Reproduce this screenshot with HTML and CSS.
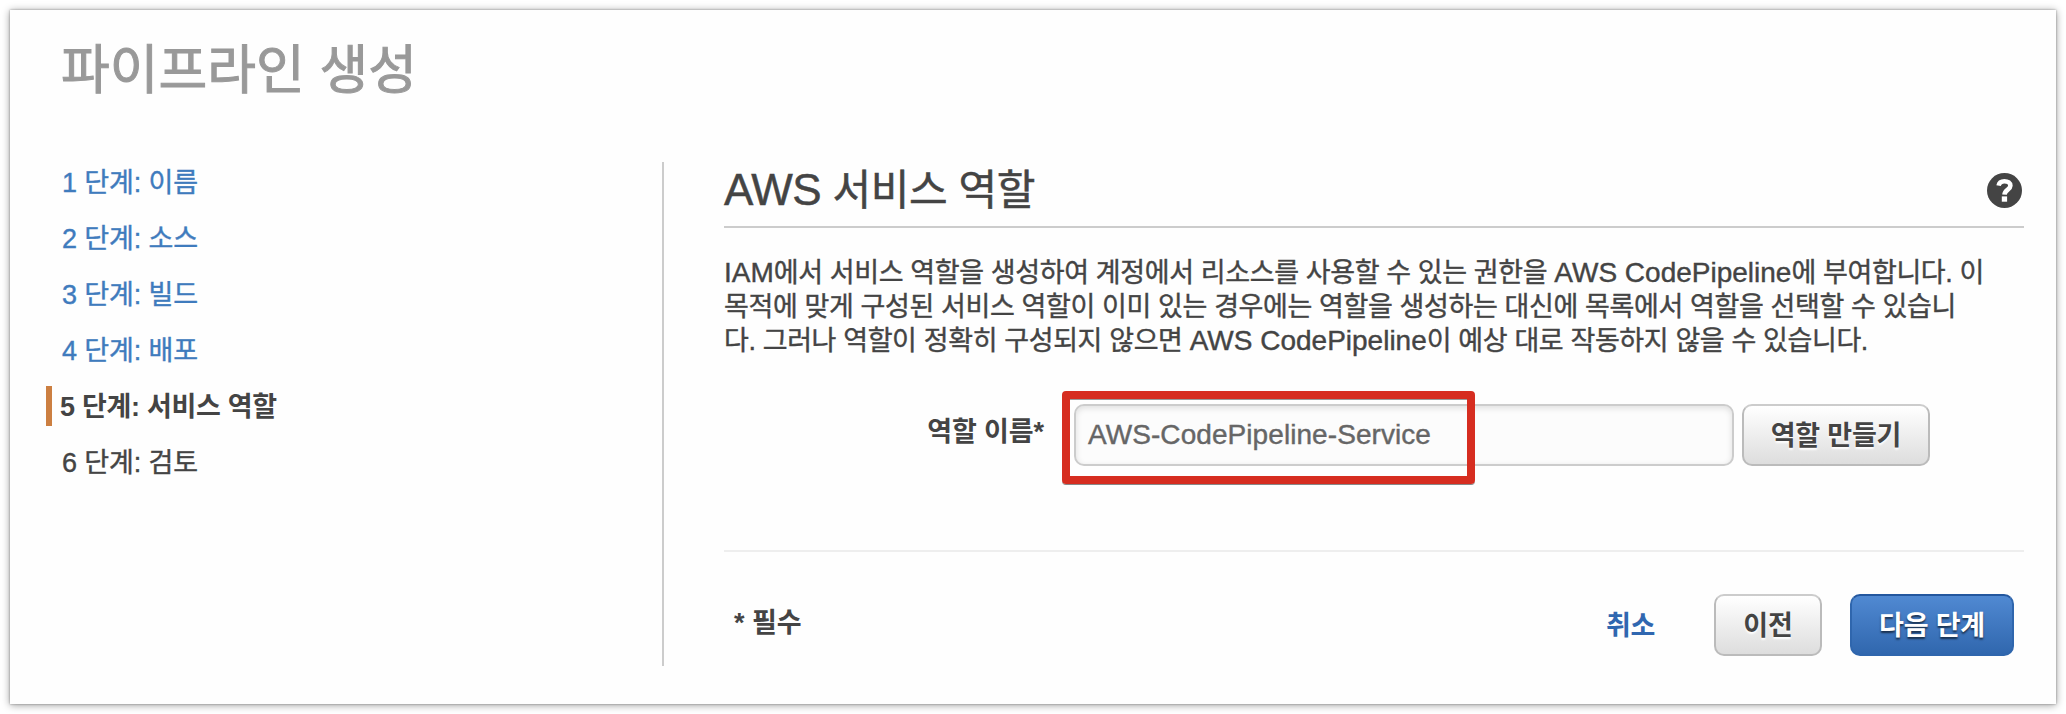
FILE: index.html
```html
<!DOCTYPE html>
<html lang="ko">
<head>
<meta charset="utf-8">
<title>파이프라인 생성</title>
<link rel="stylesheet" href="styles.css">
</head>
<body>
<div class="panel">
  <h1 class="title">파이프라인 생성</h1>
  <div class="columns">
    <nav class="steps">
      <a class="step">1 단계: 이름</a>
      <a class="step">2 단계: 소스</a>
      <a class="step">3 단계: 빌드</a>
      <a class="step">4 단계: 배포</a>
      <span class="step step-active">5 단계: 서비스 역할</span>
      <span class="step step-pending">6 단계: 검토</span>
    </nav>
    <main class="content">
      <header class="section-head">
        <h2 class="section-title"><span class="latin-title">AWS</span> 서비스 역할</h2>
        <svg class="help" viewBox="0 0 35 35">
          <circle cx="17.5" cy="17.5" r="17.5" fill="#444"/>
          <path d="M11.6 12.6C12.2 9.4 14.4 8.2 17.4 8.2C20.9 8.2 23.4 10 23.4 12.8C23.4 16.6 17.7 16.6 17.5 21.6" fill="none" stroke="#fff" stroke-width="4.6"/>
          <rect x="14.8" y="23.4" width="5.3" height="5.3" fill="#fff"/>
        </svg>
      </header>
      <p class="intro"><span class="line"><span class="latin">IAM</span>에서 서비스 역할을 생성하여 계정에서 리소스를 사용할 수 있는 권한을 <span class="latin">AWS CodePipeline</span>에 부여합니다. 이</span><span class="line">목적에 맞게 구성된 서비스 역할이 이미 있는 경우에는 역할을 생성하는 대신에 목록에서 역할을 선택할 수 있습니</span><span class="line">다. 그러나 역할이 정확히 구성되지 않으면 <span class="latin">AWS CodePipeline</span>이 예상 대로 작동하지 않을 수 있습니다.</span></p>
      <div class="field">
        <span class="label">역할 이름*</span>
        <div class="input"><span class="latin">AWS-CodePipeline-Service</span><div class="highlight"></div></div>
        <button class="button">역할 만들기</button>
      </div>
      <footer class="footer">
        <span class="required">* 필수</span>
        <a class="cancel">취소</a>
        <button class="button button-back">이전</button>
        <button class="button button-primary">다음 단계</button>
      </footer>
    </main>
  </div>
</div>
</body>
</html>
```
FILE: styles.css
```css
* { box-sizing: border-box; }
body {
  margin: 0;
  padding: 10px;
  height: 714px;
  overflow: hidden;
  background: #fff;
  color: #444;
  font: 27px/34px "Liberation Sans", "Noto Sans CJK KR", sans-serif;
  letter-spacing: -.38px;
}
.panel {
  height: 694px;
  padding: 24px 32px 0 36px;
  background: #fefefe;
  box-shadow: 0 0 2px rgba(0,0,0,.35), 0 1px 8px rgba(0,0,0,.4);
}
.title {
  margin: 0 0 58px 15px;
  height: 70px;
  line-height: 73px;
  font-size: 53px;
  font-weight: 400;
  letter-spacing: 0;
  color: #999;
  -webkit-text-stroke: 1px #999;
}
.columns { display: flex; height: 504px; }
.steps {
  display: flex;
  flex-direction: column;
  gap: 16px;
  width: 618px;
  border-right: 2px solid #ccc;
}
.step {
  height: 40px;
  padding-left: 16px;
  line-height: 42px;
  letter-spacing: -.1px;
  color: #3f7bbd;
  -webkit-text-stroke: .4px;
}
.step-active {
  padding-left: 8px;
  border-left: 6px solid #cc7f41;
  font-weight: 700;
  letter-spacing: -.3px;
  color: #444;
  -webkit-text-stroke: 0;
}
.step-pending { color: #444; }
.content { flex: 1; padding-left: 60px; }
.section-head {
  display: flex;
  justify-content: space-between;
  height: 66px;
  padding-right: 2px;
  border-bottom: 2px solid #ccc;
}
.section-title {
  margin: 0;
  font-size: 42px;
  font-weight: 400;
  line-height: 58px;
  -webkit-text-stroke: .5px;
}
.latin, .latin-title { line-height: 1; letter-spacing: 0; }
.latin { font-size: 28px; }
.latin-title { font-size: 44px; letter-spacing: -.5px; }
.help { width: 35px; height: 35px; margin-top: 11px; }
.intro { margin: 28px 0 0; -webkit-text-stroke: .4px; }
.line { display: block; height: 34px; white-space: nowrap; }
.field {
  display: flex;
  margin-top: 46px;
  height: 62px;
}
.label {
  width: 320px;
  margin-right: 30px;
  text-align: right;
  font-weight: 700;
  line-height: 56px;
  letter-spacing: -.1px;
}
.input {
  position: relative;
  width: 660px;
  height: 62px;
  margin-right: 8px;
  padding-left: 12px;
  border: 2px solid #ccc;
  border-radius: 10px;
  background: #fcfcfc;
  box-shadow: inset 0 2px 6px rgba(0,0,0,.12);
  line-height: 58px;
  color: #666;
  -webkit-text-stroke: .4px;
}
.input .latin { letter-spacing: .07px; }
.highlight {
  position: absolute;
  left: -14px;
  top: -15px;
  width: 413px;
  height: 93px;
  border: 8px solid #d62d20;
  border-radius: 4px;
  box-shadow: 0 1px 0 #888, inset 0 1px 0 #999;
}
.button {
  width: 188px;
  height: 62px;
  padding: 2px 0 0;
  border: 2px solid #bbb;
  border-top-color: #ccc;
  border-radius: 10px;
  background: linear-gradient(#fff, #ddd);
  font: inherit;
  font-weight: 700;
  letter-spacing: -.2px;
  color: #444;
  text-shadow: 0 2px 2px #fff;
}
.footer {
  display: flex;
  margin-top: 84px;
  padding: 42px 10px 0 10px;
  border-top: 2px solid #eee;
}
.required { flex: 1; font-weight: 700; line-height: 58px; letter-spacing: 0; }
.cancel { margin-right: 59px; font-weight: 700; line-height: 64px; color: #3067b0; }
.button-back { width: 108px; margin-right: 28px; }
.button-primary {
  width: 164px;
  border-color: #2f66ad;
  border-top-color: #23579e;
  background: linear-gradient(#5089d2, #3067ae);
  color: #fff;
  text-shadow: 0 2px 2px rgba(0,0,0,.6);
}
```
